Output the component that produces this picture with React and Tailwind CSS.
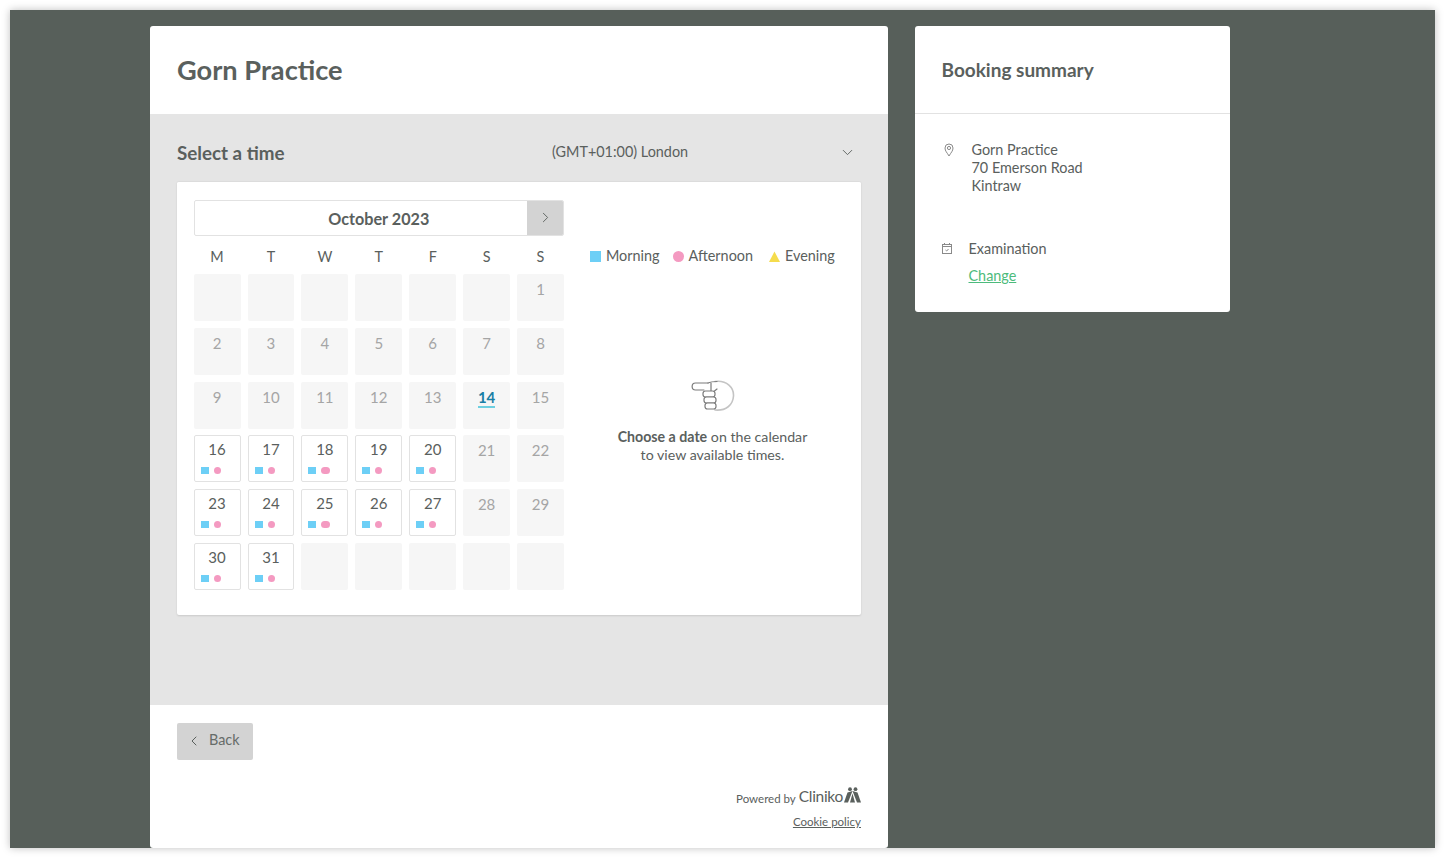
import React from "react";
import { ChevronRight, ChevronLeft, ChevronDown } from "lucide-react";

const weekDays = ["M", "T", "W", "T", "F", "S", "S"];

// 0 = empty slot, otherwise the day number
const days = [
  0, 0, 0, 0, 0, 0, 1,
  2, 3, 4, 5, 6, 7, 8,
  9, 10, 11, 12, 13, 14, 15,
  16, 17, 18, 19, 20, 21, 22,
  23, 24, 25, 26, 27, 28, 29,
  30, 31, 0, 0, 0, 0, 0,
];

const open = [16, 17, 18, 19, 20, 23, 24, 25, 26, 27, 30, 31];
const wide = [18, 25];

const DayCell = ({ day }) => {
  if (!day) return <div className="h-[47px] rounded-[2px] bg-[#f6f6f6]" />;

  if (open.includes(day)) {
    return (
      <div className="h-[47px] rounded-[2px] border border-[#e2e2e2] bg-white pt-[4px] text-center text-[15px] leading-[19px] text-[#5a605d]">
        {day}
        <div className="mt-[8px] flex items-center gap-[5px] pl-[6px]">
          <span className="h-[7px] w-[8px] bg-[#6dcff6]" />
          <span className={`h-[7px] rounded-full bg-[#f49ac1] ${wide.includes(day) ? "w-[9px]" : "w-[7px]"}`} />
        </div>
      </div>
    );
  }

  return (
    <div className="h-[47px] rounded-[2px] bg-[#f6f6f6] pt-[6px] text-center text-[15px] leading-[19px] text-[#a5a5a5]">
      {day === 14 ? (
        <span className="inline-block border-b-2 border-[#6dcfe0] font-bold leading-[17px] text-[#1a7fa5]">14</span>
      ) : (
        day
      )}
    </div>
  );
};

const App = () => {
  return (
    <div className="bg-white p-[10px] font-['Lato',sans-serif] text-[#5a605d]">
      <div className="flex h-[838px] items-start gap-[27px] overflow-hidden bg-[#575f5a] pl-[140px] pt-[16px] shadow-[0_0_8px_rgba(0,0,0,0.25)]">
        {/* Main card */}
        <div className="flex h-[822px] w-[738px] flex-col overflow-hidden rounded-[3px] bg-white">
          <div className="flex h-[88px] items-center px-[27px]">
            <h1 className="text-[27.2px] font-bold leading-none">Gorn Practice</h1>
          </div>

          <div className="h-[591px] bg-[#e5e5e5] px-[27px]">
            <div className="flex h-[67px] items-center pt-[11px]">
              <h2 className="w-[375px] text-[18.8px] font-bold">Select a time</h2>
              <span className="-mt-[2px] text-[14.4px]">(GMT+01:00) London</span>
              <ChevronDown className="-mt-[2px] ml-auto mr-[5px] h-[17px] w-[17px]" strokeWidth={1.3} />
            </div>

            <div className="flex h-[434px] rounded-[2px] border-t border-[#dcdcdc] bg-white pl-[16.6px] pt-[18px] shadow-[0_1px_2px_rgba(0,0,0,0.12)]">
              <div className="w-[370.4px]">
                <div className="relative h-[36px] overflow-hidden rounded-[2px] border border-[#e2e2e2] text-center text-[16.2px] font-bold leading-[36px]">
                  October 2023
                  <div className="absolute right-0 top-0 flex h-full w-[36px] items-center justify-center bg-[#d3d3d3]">
                    <ChevronRight className="-mt-[2px] ml-[2px] h-[17px] w-[17px]" strokeWidth={1.3} />
                  </div>
                </div>

                <div className="grid h-[38px] grid-cols-7 items-center gap-x-[7px] pt-[3px] text-center text-[14.4px]">
                  {weekDays.map((d, i) => (
                    <span key={i}>{d}</span>
                  ))}
                </div>

                <div className="grid grid-cols-7 gap-x-[7px] gap-y-[6.8px]">
                  {days.map((day, i) => (
                    <DayCell key={i} day={day} />
                  ))}
                </div>
              </div>

              <div className="ml-[26px] w-[245px]">
                {/* Legend */}
                <div className="mt-[46px] flex items-center text-[14.4px] leading-[20px]">
                  <span className="mr-[5px] h-[11px] w-[11px] bg-[#6dcff6]" />
                  Morning
                  <span className="ml-[13px] mr-[5px] h-[11px] w-[11px] rounded-full bg-[#f49ac1]" />
                  Afternoon
                  <svg className="ml-[16px] mr-[5px]" width="11" height="11" viewBox="0 0 11 11">
                    <path d="M5.5 0.5 L11 11 L0 11 Z" fill="#f5dc4d" />
                  </svg>
                  Evening
                </div>

                {/* Pointing hand */}
                <div className="mt-[114px] flex justify-center">
                  <svg width="46" height="32" viewBox="0 0 46 32" fill="none" stroke="#7b7b7b" strokeWidth="1.2" strokeLinejoin="round" strokeLinecap="round">
                    <path d="M26 1.5 C38 0 45 8 44.5 16 C44 25 37 31 26 30" stroke="#c4c4c4" strokeWidth="1.6" />
                    <path d="M19 3 H6.5 C2 3 2 10 6.5 10 H15" />
                    <path d="M19 3 C22 1.5 25 1.5 28 1.5" />
                    <path d="M22 3 V13 M23 13 L28 9" />
                    <rect x="14" y="11" width="12" height="6" rx="2.5" fill="#fff" />
                    <rect x="15" y="17" width="12" height="6" rx="2.5" fill="#fff" />
                    <rect x="16" y="23" width="11" height="6" rx="2.5" fill="#fff" />
                  </svg>
                </div>

                <p className="mt-[16px] text-center text-[14.2px] leading-[18px]">
                  <b>Choose a date</b> on the calendar
                  <br />
                  to view available times.
                </p>
              </div>
            </div>
          </div>

          {/* Footer */}
          <div className="flex-1 px-[27px] pt-[18px]">
            <button className="flex h-[37px] w-[76px] items-center rounded-[2px] bg-[#d3d3d3] pb-[3px] pl-[9px] text-[14.4px] text-[#666c69]">
              <ChevronLeft className="mt-[2px] h-[16px] w-[16px] text-[#5a605d]" strokeWidth={1.5} />
              <span className="ml-[7px]">Back</span>
            </button>

            <div className="mt-[25px] flex items-center justify-end">
              <span className="mt-[4px] text-[11.5px]">Powered by</span>
              <span className="ml-[3px] text-[15.5px] tracking-[-0.3px]">Cliniko</span>
              <svg className="-mt-[4px] ml-[1px]" width="17" height="16" viewBox="0 0 17 16" fill="#5a605d">
                <circle cx="6" cy="2.2" r="1.9" />
                <circle cx="11.5" cy="2.2" r="1.9" />
                <path d="M8.5 4 L13 15.5 H17 L13.5 5.5 Z" />
                <path d="M8.5 4 L4 15.5 H0 L3.5 5.5 Z" />
                <path d="M8.5 6.5 L11 15.5 H6 Z" />
              </svg>
            </div>
            <div className="mt-[5px] text-right text-[11.5px] underline">Cookie policy</div>
          </div>
        </div>

        {/* Booking summary */}
        <div className="h-[286px] w-[315px] rounded-[3px] bg-white">
          <div className="flex h-[88px] items-center border-b border-[#e2e2e2] pl-[26.5px] pt-[2px]">
            <h2 className="text-[19px] font-bold">Booking summary</h2>
          </div>

          <div className="flex pl-[29px] pt-[27px]">
            <svg className="mt-[2px]" width="10" height="14" viewBox="0 0 10 14" fill="none" stroke="#8a8a8a" strokeWidth="1">
              <path d="M5 13 C3 9.5 1 8 1 5 A4 4 0 0 1 9 5 C9 8 7 9.5 5 13 Z" />
              <circle cx="5" cy="5" r="1.6" />
            </svg>
            <div className="ml-[17.5px] text-[14.4px] leading-[18px]">
              Gorn Practice
              <br />
              70 Emerson Road
              <br />
              Kintraw
            </div>
          </div>

          <div className="flex pl-[27px] pt-[45px]">
            <svg className="mt-[3px]" width="10" height="11" viewBox="0 0 10 11" fill="none" stroke="#8a8a8a" strokeWidth="1">
              <rect x="0.5" y="1.5" width="9" height="9" />
              <path d="M0.5 3.5 H9.5 M2.5 0 V2 M7.5 0 V2" />
              <path d="M3.5 7 L4.7 8 L6.5 6" />
            </svg>
            <div className="ml-[16.5px] text-[14.4px] leading-[18px]">
              Examination
              <div className="mt-[9px] text-[#4dbb7c] underline">Change</div>
            </div>
          </div>
        </div>
      </div>
    </div>
  );
};

export default App;
